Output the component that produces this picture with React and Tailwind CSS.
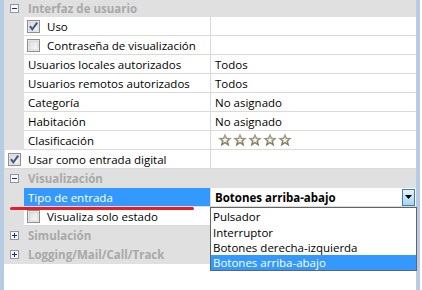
import React from "react";

const font = "font-['Segoe_UI','Open_Sans',sans-serif]";

function CheckBox({ checked }) {
  return (
    <svg width="13" height="13" viewBox="0 0 13 13" className="shrink-0">
      <defs>
        <linearGradient id="cbg" x1="0" y1="0" x2="1" y2="1">
          <stop offset="0" stopColor="#dcdcdc" />
          <stop offset="1" stopColor="#fbfbfb" />
        </linearGradient>
      </defs>
      <rect x="0.5" y="0.5" width="12" height="12" fill="#f4f4f4" stroke="#8e8f8f" />
      <rect x="2" y="2" width="9" height="9" fill="url(#cbg)" stroke="#c0c0c0" strokeWidth="0.6" />
      {checked && (
        <path d="M3 6.2 L5.3 9.4 L10.2 2.6" fill="none" stroke="#3e5591" strokeWidth="2" />
      )}
    </svg>
  );
}

function ExpandBox({ open }) {
  return (
    <svg width="9" height="9" viewBox="0 0 9 9" className="shrink-0">
      <rect x="0.5" y="0.5" width="8" height="8" fill="#f7f7f7" stroke="#8c97ab" />
      <path d="M2 4.5 H7" stroke="#1d2f6b" strokeWidth="1" />
      {!open && <path d="M4.5 2 V7" stroke="#1d2f6b" strokeWidth="1" />}
    </svg>
  );
}

function Star() {
  return (
    <svg width="14" height="14" viewBox="0 0 13 13" className="shrink-0">
      <defs>
        <linearGradient id="stg" x1="0" y1="0" x2="0" y2="1">
          <stop offset="0" stopColor="#b4ad98" />
          <stop offset="1" stopColor="#7a735c" />
        </linearGradient>
      </defs>
      <path
        d="M6.5 0.3 L8.3 4.4 L12.8 4.7 L9.4 7.7 L10.5 12.3 L6.5 9.8 L2.5 12.3 L3.6 7.7 L0.2 4.7 L4.7 4.4 Z"
        fill="url(#stg)"
      />
      <path
        d="M6.5 3.6 L7.3 5.6 L9.4 5.8 L7.8 7.2 L8.3 9.3 L6.5 8.2 L4.7 9.3 L5.2 7.2 L3.6 5.8 L5.7 5.6 Z"
        fill="#f3f1ea"
      />
    </svg>
  );
}

function Category({ label, open, first }) {
  return (
    <div className={`flex items-center bg-[#e0e0e0] ${first ? "h-[17px]" : "h-[19px]"}`}>
      <div className="w-[6px]" />
      <ExpandBox open={open} />
      <span className="ml-[9px] font-bold text-[#a9a9a9]">{label}</span>
    </div>
  );
}

function Prop({ label, value, check, indent = true, selected, children }) {
  return (
    <div className="flex h-[19px]">
      <div className={`${indent ? "w-[20px]" : "w-[1px]"} bg-[#e0e0e0] shrink-0`} />
      <div
        className={`flex items-center border-b border-r border-[#dadada] ${
          selected ? "bg-[#3399ff] text-white" : "bg-white"
        } ${indent ? "w-[187px]" : "w-[206px]"}`}
      >
        {check !== undefined ? (
          <>
            <div className="w-[3px]" />
            <CheckBox checked={check} />
            <span className="ml-[7px]">{label}</span>
          </>
        ) : (
          <span className="ml-[4px]">{label}</span>
        )}
      </div>
      <div className="flex-1 flex items-center border-b border-[#dadada] bg-white pl-[4px]">
        {children || value}
      </div>
    </div>
  );
}

export default function App() {
  return (
    <div className={`${font} text-[11.5px] leading-[15px] text-black w-[422px] h-[290px] relative overflow-hidden bg-white flex`}>
      <div className="w-[4px] bg-[#b7cbe3] shrink-0" />
      <div className="flex-1 flex flex-col">
        <Category label="Interfaz de usuario" open first />
        <Prop label="Uso" check={true} />
        <Prop label="Contraseña de visualización" check={false} />
        <Prop label="Usuarios locales autorizados" value="Todos" />
        <Prop label="Usuarios remotos autorizados" value="Todos" />
        <Prop label="Categoría" value="No asignado" />
        <Prop label="Habitación" value="No asignado" />
        <Prop label="Clasificación">
          <div className="flex gap-[1px] ml-[3px]">
            <Star />
            <Star />
            <Star />
            <Star />
            <Star />
          </div>
        </Prop>
        <Prop label="Usar como entrada digital" check={true} indent={false} />
        <Category label="Visualización" open />
        <Prop label="Tipo de entrada" selected>
          <div className="flex-1 flex items-center justify-between pr-[1px]">
            <span className="font-bold">Botones arriba-abajo</span>
            <div className="w-[13px] h-[17px] border border-[#3c7fb1] bg-gradient-to-b from-[#e6f3fb] to-[#a9d3ef] flex items-center justify-center">
              <svg width="7" height="4" viewBox="0 0 7 4">
                <path d="M0 0 H7 L3.5 4 Z" fill="#000" />
              </svg>
            </div>
          </div>
        </Prop>
        <Prop label="Visualiza solo estado" check={false} />
        <Category label="Simulación" />
        <Category label="Logging/Mail/Call/Track" />
        <div className="flex-1 bg-white" />
      </div>
      <div className="w-[4px] bg-[#b7cbe3] shrink-0" />
      <div className="w-[2px] bg-white shrink-0" />

      {/* red annotation underline */}
      <div className="absolute left-[10px] top-[207px] w-[184px] h-[3px] rounded-full bg-[#e3202a]" />

      {/* dropdown list */}
      <div className="absolute left-[210px] top-[207px] w-[207px] h-[64px] border border-[#646464] bg-white flex flex-col">
        <div className="h-[16px] flex items-center pl-[2px] text-black">Pulsador</div>
        <div className="h-[16px] flex items-center pl-[2px] text-black">Interruptor</div>
        <div className="h-[15px] flex items-center pl-[2px] text-black">Botones derecha-izquierda</div>
        <div className="h-[15px] flex items-center pl-[2px] bg-[#3399ff] text-white">Botones arriba-abajo</div>
      </div>
    </div>
  );
}
